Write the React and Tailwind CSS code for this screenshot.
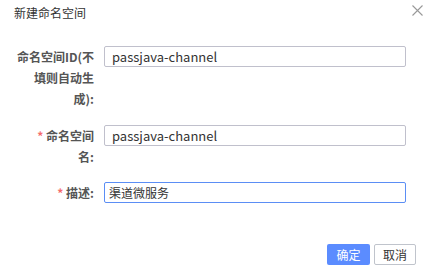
export default function App() {
  const font = { fontFamily: '"Noto Sans CJK SC", "Noto Sans", sans-serif' };
  return (
    <div className="w-[423px] h-[271px] bg-white relative overflow-hidden text-[12px] text-[#333]" style={font}>
      <div className="flex items-start justify-between">
        <div className="pl-[14px] pt-[5px] leading-[16px] text-[12px] text-[#333]">新建命名空间</div>
        <svg className="absolute right-0 top-[5px]" width="11" height="11" viewBox="0 0 11 11">
          <path d="M0.5 0.5 L10.5 10.5 M10.5 0.5 L0.5 10.5" stroke="#999" strokeWidth="1.1" />
        </svg>
      </div>
      <div className="mt-[25px] flex flex-col">
        <div className="flex items-start">
          <div className="w-[94px] pl-[14px] pr-0 text-right font-bold text-[#555] leading-[21px]">
            命名空间ID(不<br />填则自动生<br />成):
          </div>
          <div className="ml-[10px] w-[302px] h-[21px] border border-[#c0c0cc] rounded-[2px] flex items-center pl-[7px] leading-[19px] text-[13px] text-[#333]">
            passjava-channel
          </div>
        </div>
        <div className="flex items-start mt-[16px]">
          <div className="w-[94px] pl-[14px] text-right font-bold text-[#555] leading-[21px]">
            <span className="text-[#f56c6c]">*</span> 命名空间<br />名:
          </div>
          <div className="ml-[10px] w-[302px] h-[21px] border border-[#c0c0cc] rounded-[2px] flex items-center pl-[7px] leading-[19px] text-[13px] text-[#333]">
            passjava-channel
          </div>
        </div>
        <div className="flex items-start mt-[15px]">
          <div className="w-[94px] pl-[14px] text-right font-bold text-[#555] leading-[21px]">
            <span className="text-[#f56c6c]">*</span> 描述:
          </div>
          <div className="ml-[10px] w-[302px] h-[21px] border border-[#5b8ef5] rounded-[2px] flex items-center pl-[4px] leading-[19px] text-[#333]">
            渠道微服务
          </div>
        </div>
      </div>
      <div className="mt-[41px] flex justify-end pr-[7px] gap-[4px]">
        <button className="w-[43px] h-[21px] bg-[#5b8cff] text-white rounded-[2px] text-[12px] leading-[21px]">确定</button>
        <button className="w-[42px] h-[21px] bg-white border border-[#c0c4cc] text-[#333] rounded-[2px] text-[12px] leading-[19px]">取消</button>
      </div>
    </div>
  );
}
